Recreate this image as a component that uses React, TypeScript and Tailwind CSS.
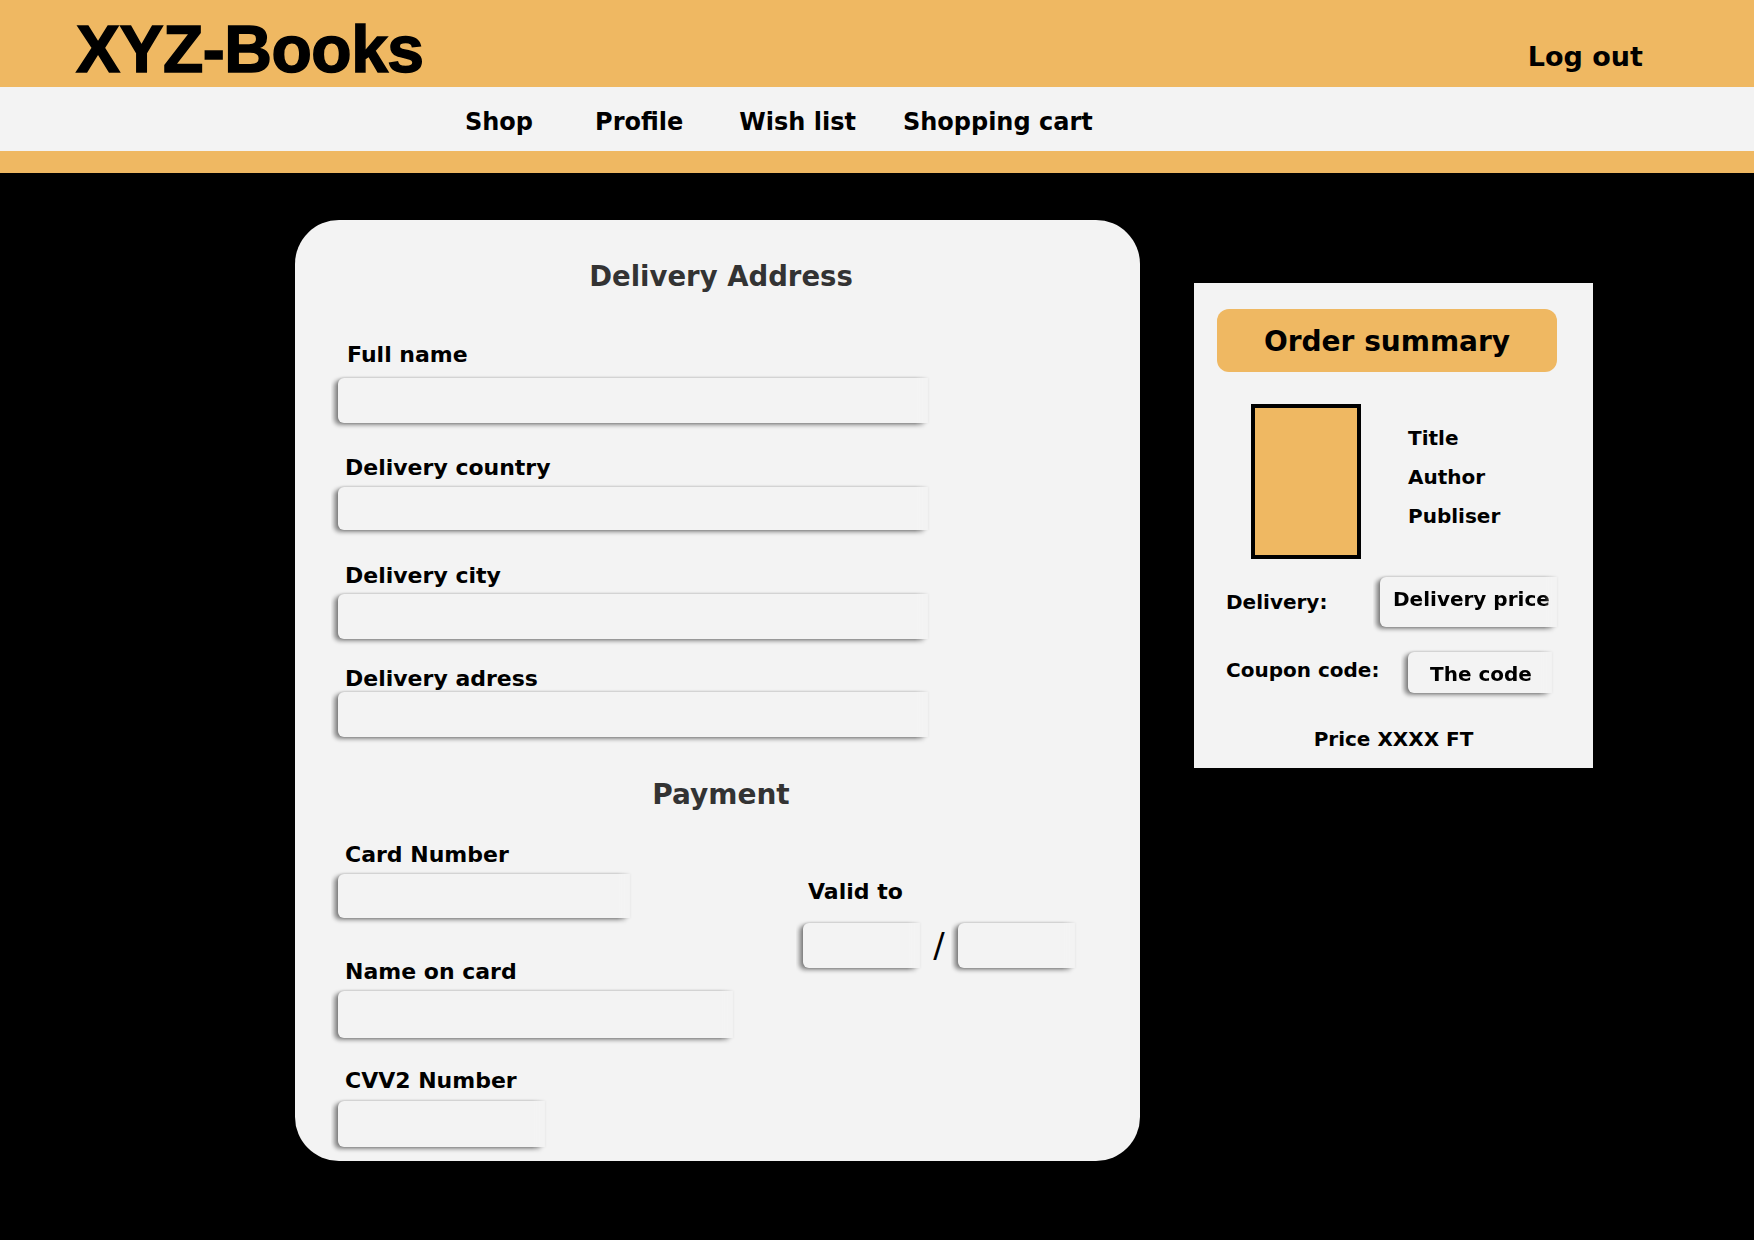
import React from "react";
import clsx from "clsx";

const navItems = [
  { label: "Shop", className: "ml-[465px]" },
  { label: "Profile", className: "ml-[62px]" },
  { label: "Wish list", className: "ml-[56px]" },
  { label: "Shopping cart", className: "ml-[47px]" },
];

/* Input box with a soft left/top/bottom shadow that fades out to the right */
function Box({ className, children }: { className?: string; children?: React.ReactNode }) {
  return (
    <div className="-m-[7px] w-fit p-[7px] [mask-image:linear-gradient(to_right,#000_calc(100%_-_20px),transparent)]">
      <div
        className={clsx(
          "rounded-l-[6px] bg-[#f3f3f3] shadow-[-4px_2px_4px_rgba(0,0,0,0.42),0_0_3px_rgba(0,0,0,0.25)]",
          className
        )}
      >
        {children}
      </div>
    </div>
  );
}

type FieldProps = {
  label: string;
  labelClass: string;
  inputClass: string;
};

function Field({ label, labelClass, inputClass }: FieldProps) {
  return (
    <>
      <label className={clsx("block text-[22px] leading-[26px] text-black", labelClass)}>{label}</label>
      <Box className={inputClass} />
    </>
  );
}

function CheckoutForm() {
  return (
    <div className="h-[941px] w-[845px] shrink-0 rounded-[44px] bg-[#f3f3f3] pt-[40px]">
      <h2 className="pl-[7px] text-center text-[27.5px] leading-[32px] text-[#333]">Delivery Address</h2>

      <div className="pl-[43px]">
        <Field label="Full name" labelClass="ml-[9px] mt-[50px]" inputClass="mt-[10px] h-[45px] w-[590px]" />
        <Field label="Delivery country" labelClass="ml-[7px] mt-[32px]" inputClass="mt-[6px] h-[43px] w-[590px]" />
        <Field label="Delivery city" labelClass="ml-[7px] mt-[33px]" inputClass="mt-[5px] h-[45px] w-[590px]" />
        <Field label="Delivery adress" labelClass="ml-[7px] mt-[27px]" inputClass="mt-0 h-[45px] w-[590px]" />
      </div>

      <h2 className="mt-[42px] pl-[7px] text-center text-[28px] leading-[32px] text-[#333]">Payment</h2>

      <div className="flex pl-[43px]">
        <div className="w-[465px]">
          <Field label="Card Number" labelClass="ml-[7px] mt-[31px]" inputClass="mt-[6px] h-[44px] w-[292px]" />
          <Field label="Name on card" labelClass="ml-[7px] mt-[41px]" inputClass="mt-[6px] h-[47px] w-[395px]" />
          <Field label="CVV2 Number" labelClass="ml-[7px] mt-[30px]" inputClass="mt-[7px] h-[46px] w-[207px]" />
        </div>
        <div>
          <label className="ml-[5px] mt-[68px] block text-[22px] leading-[26px]">Valid to</label>
          <div className="mt-[18px] flex items-center">
            <Box className="h-[45px] w-[117px]" />
            <span className="w-[38px] text-center font-['DejaVu_Sans',sans-serif] text-[34px] font-normal leading-[45px]">
              /
            </span>
            <Box className="h-[45px] w-[117px]" />
          </div>
        </div>
      </div>
    </div>
  );
}

function OrderSummary() {
  return (
    <aside className="ml-[54px] mt-[63px] h-[485px] w-[399px] shrink-0 bg-[#f3f3f3] pt-[26px] text-[20px] text-black">
      <div className="ml-[23px] flex h-[63px] w-[340px] items-center justify-center rounded-[12px] bg-[#efb862] pt-[2px] text-[28px]">
        Order summary
      </div>

      <div className="mt-[32px] flex">
        <div className="ml-[57px] h-[155px] w-[110px] border-[4px] border-black bg-[#efb862]" />
        <div className="ml-[47px] mt-[15px] leading-[39px]">
          <p>Title</p>
          <p>Author</p>
          <p>Publiser</p>
        </div>
      </div>

      <div className="mt-[18px] flex items-center pl-[32px]">
        <span className="w-[154px]">Delivery:</span>
        <Box className="flex h-[50px] w-[177px] items-center pb-[6px] pl-[13px]">Delivery price</Box>
      </div>

      <div className="mt-[25px] flex items-center pl-[32px]">
        <span className="w-[182px] pb-[6px]">Coupon code:</span>
        <Box className="flex h-[41px] w-[144px] items-center pl-[22px] pt-[2px]">The code</Box>
      </div>

      <p className="mt-[34px] text-center leading-[24px]">Price XXXX FT</p>
    </aside>
  );
}

export default function App() {
  return (
    <div className="flex min-h-screen flex-col bg-black font-['DejaVu_Sans',sans-serif] font-bold text-black">
      <header className="flex h-[87px] items-start bg-[#efb862]">
        <h1 className="ml-[76px] mt-[16px] font-['Liberation_Sans',Arial,sans-serif] text-[66px] leading-none tracking-[-0.5px] [-webkit-text-stroke:1.5px_black]">
          XYZ-Books
        </h1>
        <a href="#" className="ml-auto mr-[111px] mt-[43px] text-[27px] leading-none">
          Log out
        </a>
      </header>

      <nav className="flex h-[64px] items-start bg-[#f3f3f3] pt-[23px] text-[24px] leading-none">
        {navItems.map((item) => (
          <a key={item.label} href="#" className={item.className}>
            {item.label}
          </a>
        ))}
      </nav>
      <div className="h-[22px] bg-[#efb862]" />

      <main className="flex flex-1 items-start bg-black pl-[295px] pt-[47px]">
        <CheckoutForm />
        <OrderSummary />
      </main>
    </div>
  );
}
